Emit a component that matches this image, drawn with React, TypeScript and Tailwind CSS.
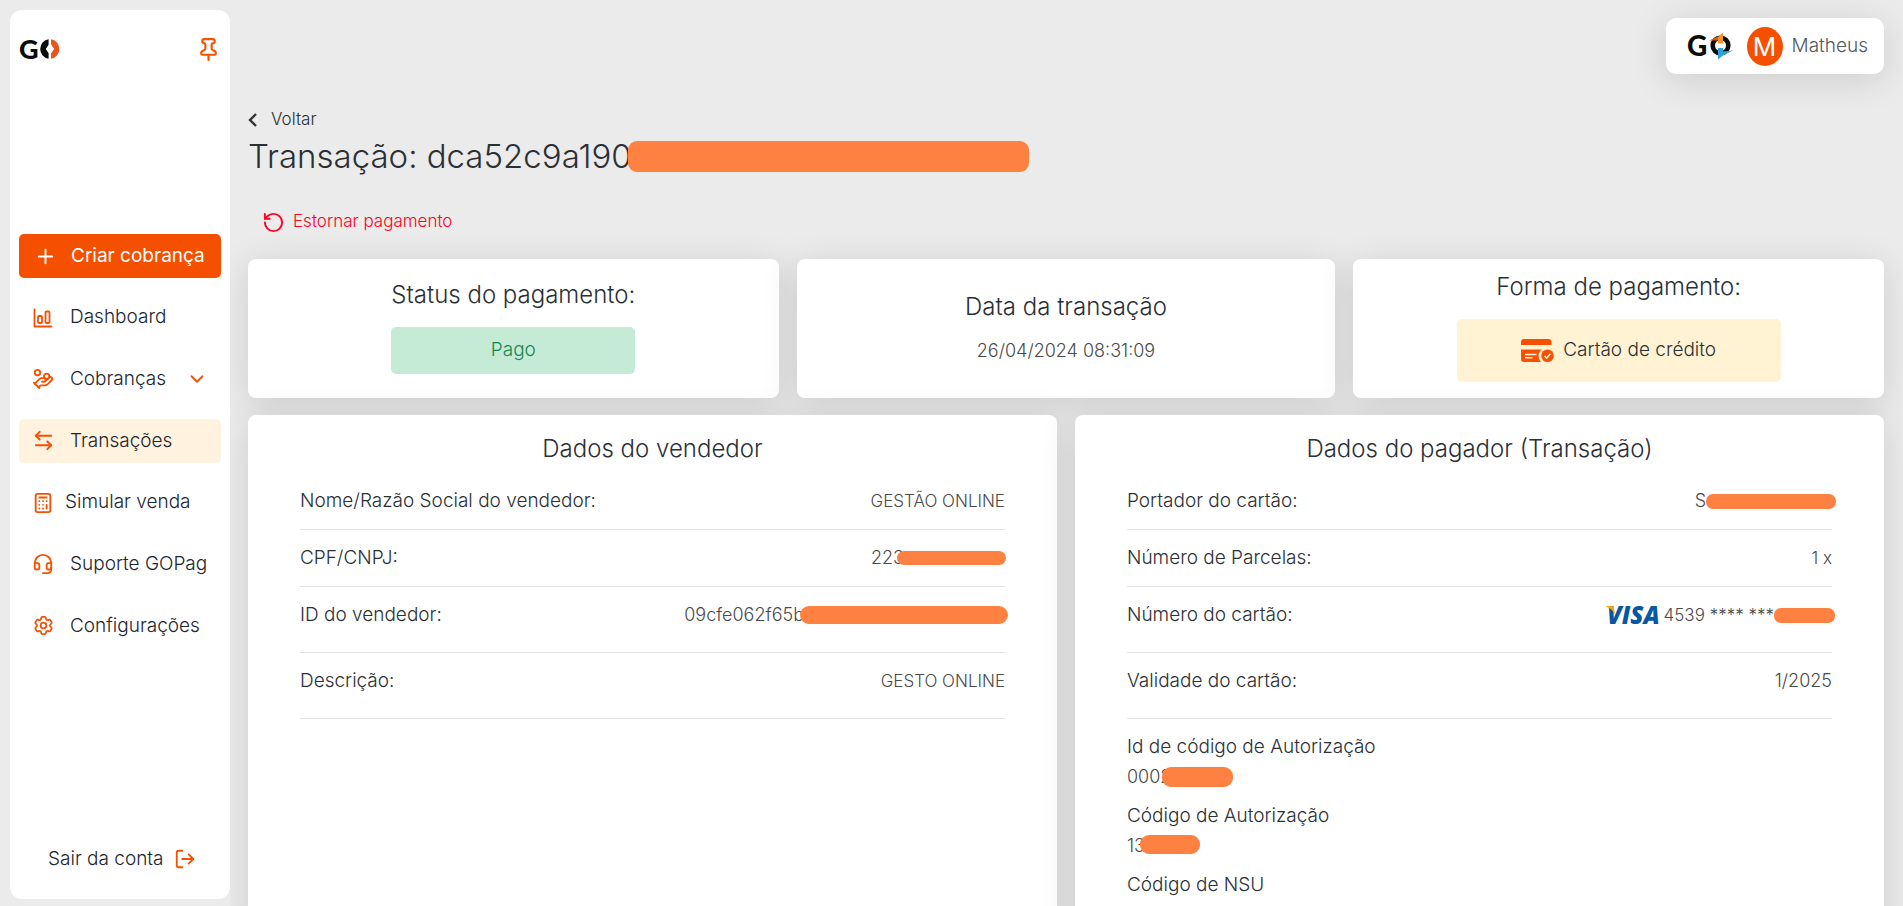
import React from "react";
import {
  ArrowLeftRight,
  Calculator,
  ChevronDown,
  HandCoins,
  Headset,
  LogOut,
  Pin,
  Plus,
  RotateCcw,
} from "lucide-react";
import { HiOutlineCog6Tooth } from "react-icons/hi2";

const CARD = "rounded-[8px] bg-white shadow-[0_6px_36px_rgba(0,0,0,0.13)]";

function GoLogo() {
  return (
    <svg viewBox="0 0 43 34" className="h-[34px] w-[43px] overflow-visible" role="img" aria-label="GO">
      <text x="0" y="26.500" fontFamily="Lato, sans-serif" fontWeight="900" fontSize="27" fill="#0c0c0c">G</text>
      <path d="M29.600 7.300A9.800 9.800 0 0 0 29.600 26.700V21.200L26.800 17L29.600 12.800Z" fill="#0c0c0c" />
      <path d="M32 7.300A9.800 9.800 0 0 1 32 26.700V21.600L35.200 17L32 12.400Z" fill="#e8561c" />
    </svg>
  );
}

function BrandLogo() {
  return (
    <svg viewBox="0 0 46 36" className="h-9 w-[46px] overflow-visible" role="img" aria-label="GO">
      <text x="0" y="27.500" fontFamily="Lato, sans-serif" fontWeight="900" fontSize="28" fill="#0c0c0c">G</text>
      <circle cx="33.500" cy="17.500" r="7.800" fill="none" stroke="#0c0c0c" strokeWidth="4.600" />
      <path d="M31 9L36 4.500V15.500H31Z" fill="#f6921e" />
      <path d="M22 12.500L31 8.500V12.500Z" fill="#e8561c" />
      <path d="M31 20H36V27.500L31 31.500Z" fill="#2fa3dc" />
      <path d="M36 23.500L46 22.500L36 27.500Z" fill="#2fa3dc" />
    </svg>
  );
}

function ChartIcon() {
  return (
    <svg viewBox="0 0 20 20" className="size-5" fill="none" stroke="currentColor" strokeWidth="1.8" strokeLinecap="round" strokeLinejoin="round">
      <path d="M1.500 1.500V18.500H18.500" />
      <rect x="5" y="8" width="4" height="7" rx="1" />
      <rect x="12.500" y="3.500" width="4" height="11.500" rx="1" />
    </svg>
  );
}

function CreditCardIcon() {
  return (
    <svg viewBox="0 0 33 23" className="h-[23px] w-[33px]">
      <path d="M3 0H27.500Q30.500 0 30.500 3V6H0V3Q0 0 3 0Z" fill="#f75000" />
      <path d="M0 10.500H21Q17.500 13 17.500 17Q17.500 20.500 20 23H3Q0 23 0 20Z" fill="#f75000" />
      <path d="M4 15.500H15.500M4 18.800H11.500" stroke="#fff3d4" strokeWidth="1.400" />
      <circle cx="26.500" cy="16.700" r="6.300" fill="#f75000" />
      <path d="M23.600 17L25.700 19L29.400 14.800" stroke="#fff3d4" strokeWidth="1.600" fill="none" />
    </svg>
  );
}

function VisaLogo() {
  return (
    <svg viewBox="0 0 54 34" className="-my-1 h-[34px] w-[54px] overflow-visible" role="img" aria-label="Visa">
      <text x="1" y="25.700" fontFamily="'Open Sans', sans-serif" fontWeight="800" fontStyle="italic" fontSize="24" fill="#0657a5">VISA</text>
      <path d="M0 8H5.500Q7.400 8 7.800 10L9.200 17Q6 10.500 0 8.600Z" fill="#f9a51a" />
    </svg>
  );
}

type NavItem = { label: string; icon: React.ReactNode; active?: boolean; expands?: boolean; tight?: boolean };

const NAV: NavItem[] = [
  { label: "Dashboard", icon: <ChartIcon /> },
  { label: "Cobranças", icon: <HandCoins size={22} />, expands: true },
  { label: "Transações", icon: <ArrowLeftRight size={23} /> , active: true },
  { label: "Simular venda", icon: <Calculator size={22} />, tight: true },
  { label: "Suporte GOPag", icon: <Headset size={22} /> },
  { label: "Configurações", icon: <HiOutlineCog6Tooth size={23} strokeWidth={1.8} /> },
];

function Sidebar() {
  return (
    <aside className="relative z-10 mt-[10px] mb-[7px] ml-[10px] flex w-[220px] shrink-0 flex-col rounded-xl bg-white px-[9px] pt-6 pb-7 text-[19px] text-[#1c2630]">
      <div className="flex h-[30px] items-center justify-between">
        <GoLogo />
        <button type="button" aria-label="Fixar menu" className="text-[#f75000]">
          <Pin size={25} />
        </button>
      </div>
      <nav className="mt-[170px] flex h-[414px] flex-col justify-between">
        <a href="#" className="flex h-11 items-center rounded-[5px] bg-[#f55000] pl-[14px] text-white">
          <span className="flex w-6 justify-center"><Plus size={23} /></span>
          <span className="ml-[14px] font-normal whitespace-nowrap">Criar cobrança</span>
        </a>
        {NAV.map((item) => (
          <a
            key={item.label}
            href="#"
            className={`flex h-11 items-center rounded-[5px] pl-3 ${item.active ? "bg-[#fff2df]" : ""}`}
          >
            <span className="flex w-6 justify-center text-[#f75000]">{item.icon}</span>
            <span className={`whitespace-nowrap ${item.tight ? "ml-[10px]" : "ml-[15px]"}`}>{item.label}</span>
            {item.expands && <ChevronDown size={22} className="mr-[13px] ml-auto text-[#f75000]" />}
          </a>
        ))}
      </nav>
      <button type="button" className="mt-auto flex h-6 items-center gap-[10px] pl-[29px]">
        Sair da conta
        <LogOut size={22} className="text-[#f75000]" />
      </button>
    </aside>
  );
}

function Bar({ className }: { className: string }) {
  return <span className={`relative block shrink-0 bg-[#ff8141] ${className}`} />;
}

type RowProps = { label: string; tall?: boolean; compact?: boolean; children: React.ReactNode };

function Row({ label, tall, compact, children }: RowProps) {
  return (
    <div className={`flex justify-between border-b border-[#e3e3e3] pt-4 leading-6 ${tall ? "pb-[25px]" : "pb-4"}`}>
      <dt className="text-[19px] leading-6">{label}</dt>
      <dd className={`flex h-6 items-center text-[#4a4a4a] ${compact ? "text-[17px]" : "text-lg"}`}>{children}</dd>
    </div>
  );
}

function Summary({ title, children }: { title: string; children: React.ReactNode }) {
  return (
    <section className={`${CARD} flex h-[139px] flex-col items-center justify-center gap-5`}>
      <h2 className="text-2xl leading-6">{title}</h2>
      {children}
    </section>
  );
}

function Details({ title, children }: { title: string; children: React.ReactNode }) {
  return (
    <section className={`${CARD} px-[52px] pt-[22px] pb-10`}>
      <h2 className="mb-3 text-center text-2xl leading-6">{title}</h2>
      {children}
    </section>
  );
}

export default function App() {
  return (
    <div className="flex h-screen overflow-hidden bg-[#ebebeb] font-['Inter',sans-serif] font-light text-[#2b3035]">
      <Sidebar />
      <main className="min-w-0 flex-1 overflow-y-auto pt-[18px] pr-[19px] pl-[18px] [scrollbar-width:none]">
        <header className="flex justify-end">
          <div className="flex h-14 items-center rounded-[10px] bg-white pr-4 pl-[21px] shadow-[0_6px_36px_rgba(0,0,0,0.13)]">
            <BrandLogo />
            <span className="ml-[14px] flex h-[39px] w-9 items-center justify-center rounded-[50%] bg-[#f55000] text-[26px] font-normal text-white">
              M
            </span>
            <span className="ml-[9px] text-[19px] text-[#505860]">Matheus</span>
          </div>
        </header>

        <a href="#" className="mt-[34px] flex h-6 w-fit items-center gap-[14px] text-[17px]">
          <svg viewBox="0 0 9 14" className="h-[14px] w-[9px]" fill="none" stroke="#333" strokeWidth="2.4">
            <path d="M8 1L2 7L8 13" />
          </svg>
          Voltar
        </a>
        <h1 className="mt-1 flex h-10 items-center text-[33px] leading-10 whitespace-nowrap">
          Transação: dca52c9a190
          <Bar className="-ml-1 h-[31px] w-[401px] rounded-[9px]" />
        </h1>
        <button type="button" className="mt-[34px] ml-[14px] flex h-6 items-center gap-2 text-[17px] text-[#ff0024]">
          <RotateCcw size={23} strokeWidth={2} />
          Estornar pagamento
        </button>

        <div className="mt-[25px] grid grid-cols-[531fr_539fr_531fr] gap-[18px]">
          <Summary title="Status do pagamento:">
            <span className="flex h-[47px] w-[46%] items-center justify-center rounded-[5px] bg-[#c5ebd6] text-[19px] text-[#198754]">
              Pago
            </span>
          </Summary>
          <Summary title="Data da transação">
            <span className="text-lg leading-6 text-[#4a4a4a]">26/04/2024 08:31:09</span>
          </Summary>
          <Summary title="Forma de pagamento:">
            <span className="flex h-[63px] w-[61%] items-center justify-center gap-[9px] rounded-[5px] bg-[#fff3d4] text-[19px]">
              <CreditCardIcon />
              Cartão de crédito
            </span>
          </Summary>
        </div>

        <div className="mt-[17px] grid grid-cols-2 gap-[18px]">
          <Details title="Dados do vendedor">
            <dl>
              <Row label="Nome/Razão Social do vendedor:" compact>GESTÃO ONLINE</Row>
              <Row label="CPF/CNPJ:">
                223
                <Bar className="-mr-px -ml-[7px] h-[14px] w-[109px] rounded-[7px]" />
              </Row>
              <Row label="ID do vendedor:" tall>
                09cfe062f65b
                <Bar className="-mr-[3px] -ml-1 h-[18px] w-[208px] rounded-[9px]" />
              </Row>
              <Row label="Descrição:" tall compact>GESTO ONLINE</Row>
            </dl>
          </Details>
          <Details title="Dados do pagador (Transação)">
            <dl>
              <Row label="Portador do cartão:">
                S
                <Bar className="-mr-1 h-[15px] w-[130px] rounded-[7px]" />
              </Row>
              <Row label="Número de Parcelas:" compact>1 x</Row>
              <Row label="Número do cartão:" tall compact>
                <VisaLogo />
                <span className="ml-1">4539 **** ***</span>
                <Bar className="-mr-[3px] h-[15px] w-[61px] rounded-[7px]" />
              </Row>
              <Row label="Validade do cartão:" tall>1/2025</Row>
              <div className="mt-4 flex flex-col gap-[15px] leading-6">
                <div>
                  <dt className="text-[19px] leading-6">Id de código de Autorização</dt>
                  <dd className="mt-[6px] flex items-center text-lg leading-6 text-[#4a4a4a]">
                    0002
                    <Bar className="-ml-[9px] h-5 w-[71px] rounded-[9px]" />
                  </dd>
                </div>
                <div>
                  <dt className="text-[19px] leading-6">Código de Autorização</dt>
                  <dd className="mt-[6px] flex items-center text-lg leading-6 text-[#4a4a4a]">
                    13
                    <Bar className="-ml-[5px] mb-1 h-[19px] w-[60px] rounded-[9px]" />
                  </dd>
                </div>
                <div>
                  <dt className="text-[19px] leading-6">Código de NSU</dt>
                </div>
              </div>
            </dl>
          </Details>
        </div>
      </main>
    </div>
  );
}
